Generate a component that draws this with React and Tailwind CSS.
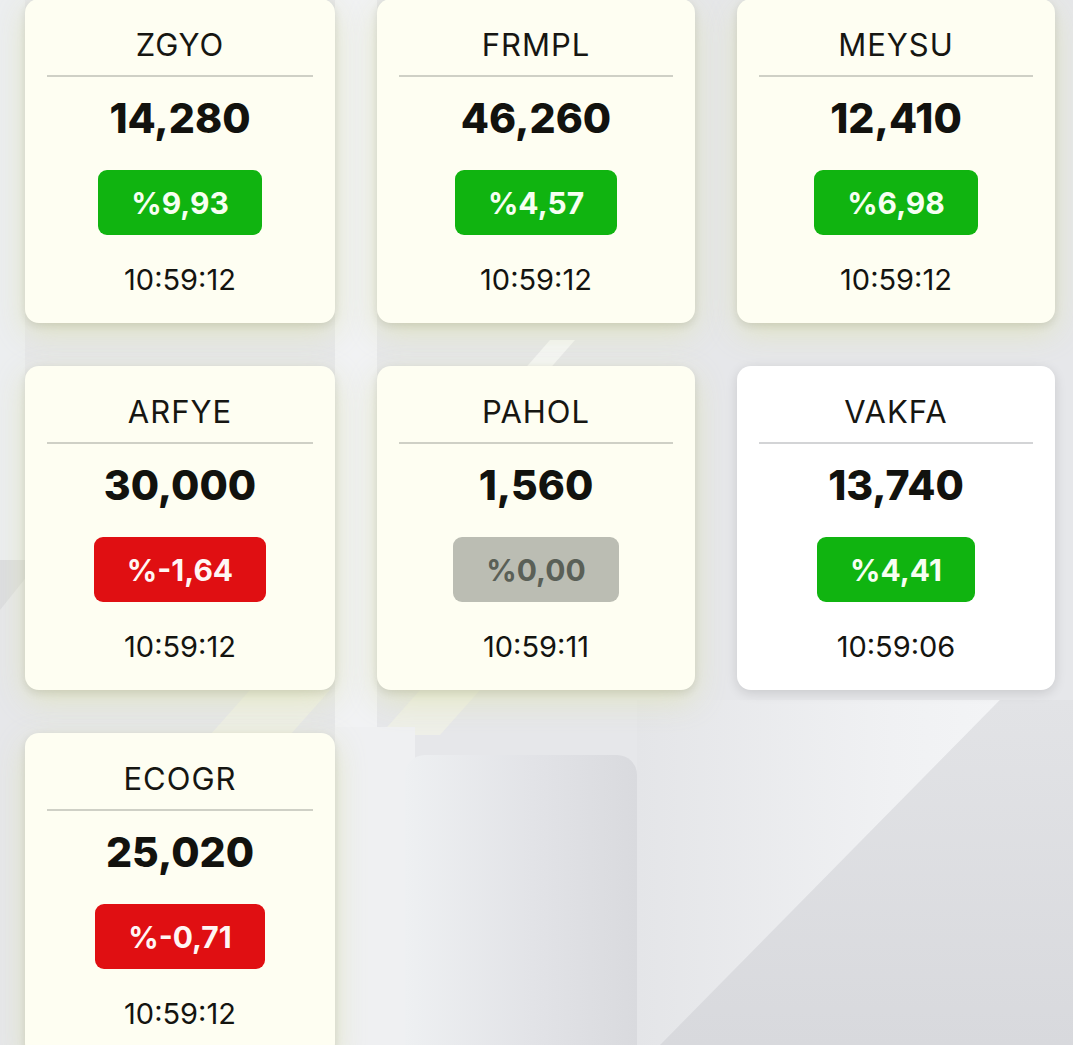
import React from "react";

const stocks = [
  { code: "ZGYO", price: "14,280", change: "%9,93", time: "10:59:12", dir: "up" },
  { code: "FRMPL", price: "46,260", change: "%4,57", time: "10:59:12", dir: "up" },
  { code: "MEYSU", price: "12,410", change: "%6,98", time: "10:59:12", dir: "up" },
  { code: "ARFYE", price: "30,000", change: "%-1,64", time: "10:59:12", dir: "down" },
  { code: "PAHOL", price: "1,560", change: "%0,00", time: "10:59:11", dir: "flat" },
  { code: "VAKFA", price: "13,740", change: "%4,41", time: "10:59:06", dir: "up", fresh: true },
  { code: "ECOGR", price: "25,020", change: "%-0,71", time: "10:59:12", dir: "down" },
];

const badgeColors = {
  up: "bg-[#10b410] text-[#f7fff2]",
  down: "bg-[#e00f12] text-[#fff6f4]",
  flat: "bg-[#bbbdb3] text-[#5a6057]",
};

function Background() {
  return (
    <svg
      className="absolute inset-0 h-full w-full"
      viewBox="0 0 1073 1045"
      preserveAspectRatio="none"
    >
      <defs>
        <linearGradient id="blockGrad" x1="0" y1="0" x2="1" y2="0">
          <stop offset="0" stopColor="#eef0f2" />
          <stop offset="0.55" stopColor="#e2e3e7" />
          <stop offset="1" stopColor="#d9dade" />
        </linearGradient>
        <linearGradient id="bandGrad" x1="0" y1="0" x2="1" y2="0">
          <stop offset="0" stopColor="#e4e5e8" />
          <stop offset="0.7" stopColor="#f0f1f3" />
          <stop offset="1" stopColor="#f3f4f6" />
        </linearGradient>
        <linearGradient id="darkGrad" x1="0" y1="0" x2="0" y2="1">
          <stop offset="0" stopColor="#e2e3e6" />
          <stop offset="1" stopColor="#d8d9dd" />
        </linearGradient>
      </defs>
      <rect width="1073" height="1045" fill="#e6e7ea" />
      <rect x="0" y="0" width="25" height="560" fill="#eceef0" />
      <polygon points="0,560 40,560 0,610" fill="#dcdde0" />
      <rect x="335" y="0" width="42" height="740" fill="#f1f2f4" />
      <polygon points="550,340 575,340 540,380 515,380" fill="#f6f7f8" />
      <polygon points="250,690 330,690 290,735 210,735" fill="#eeefe8" />
      <polygon points="420,690 480,690 440,735 380,735" fill="#eeefe8" />
      <rect x="335" y="727" width="80" height="318" fill="#eff0f2" />
      <rect x="405" y="755" width="232" height="320" rx="20" fill="url(#blockGrad)" />
      <polygon points="637,700 1000,700 660,1045 637,1045" fill="url(#bandGrad)" />
      <polygon points="1000,700 1073,700 1073,1045 660,1045" fill="url(#darkGrad)" />
    </svg>
  );
}

function StockCard({ code, price, change, time, dir, fresh }) {
  return (
    <div
      className={`flex h-[324px] flex-col items-center rounded-[14px] pt-[30px] ${
        fresh
          ? "bg-white shadow-[0_3px_12px_rgba(0,0,0,0.13)]"
          : "bg-[#fefef2] shadow-[0_3px_8px_rgba(0,0,0,0.1),0_10px_30px_rgba(222,226,185,0.8)]"
      }`}
    >
      <div className="text-[31px] font-normal leading-none tracking-[1px] text-[#161612]">
        {code}
      </div>
      <div
        className={`mx-[22px] mt-[15px] h-[2px] self-stretch ${
          fresh ? "bg-[#d3d4d6]" : "bg-[#cfd0c6]"
        }`}
      />
      <div className="mt-[21px] text-[41px] font-extrabold leading-none text-[#12120e]">
        {price}
      </div>
      <div
        className={`mt-[31px] flex h-[65px] items-center rounded-[9px] px-[33px] text-[30px] font-bold leading-none ${badgeColors[dir]}`}
      >
        {change}
      </div>
      <div className="mt-[30px] text-[29px] font-normal leading-none text-[#141410]">{time}</div>
    </div>
  );
}

export default function App() {
  return (
    <div
      className="relative h-[1045px] w-full overflow-hidden"
      style={{ fontFamily: "Inter, 'Liberation Sans', sans-serif" }}
    >
      <Background />
      <div className="relative -mt-px grid grid-cols-[310px_318px_318px] gap-x-[42px] gap-y-[43px] pl-[25px]">
        {stocks.map((s) => (
          <StockCard key={s.code} {...s} />
        ))}
      </div>
    </div>
  );
}
